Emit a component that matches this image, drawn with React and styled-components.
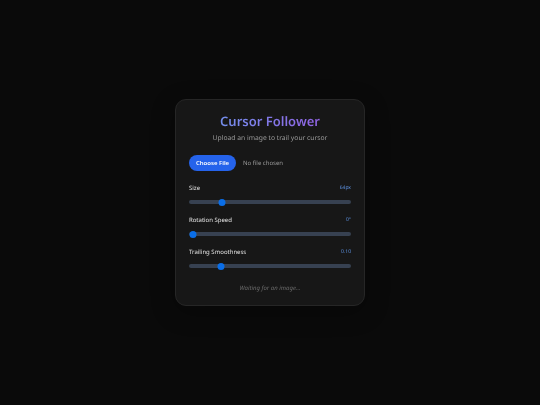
import styled, { createGlobalStyle } from 'styled-components';

const Global = createGlobalStyle`
    html, body, #root {
        height: 100%;
        margin: 0;
    }
    body {
        background: #0a0a0a;
        font-family: 'Noto Sans', sans-serif;
        text-rendering: geometricPrecision;
    }
`;

const Page = styled.div`
    height: 405px;
    display: flex;
    align-items: center;
    justify-content: center;
`;

const Card = styled.div`
    width: 190px;
    height: 207px;
    box-sizing: border-box;
    padding: 11px 13px 0;
    background: #171717;
    border: 1px solid #262626;
    border-radius: 11px;
    box-shadow: 0 6px 24px rgba(0, 0, 0, 0.3);
    display: flex;
    flex-direction: column;
    will-change: transform;
`;

const Title = styled.h1`
    margin: 0;
    font-size: 13px;
    line-height: 20px;
    font-weight: 600;
    text-align: center;
    background: linear-gradient(90deg, #6b9cf0, #9a55e0);
    -webkit-background-clip: text;
    background-clip: text;
    color: transparent;
`;

const Subtitle = styled.p`
    margin: 1px 0 0;
    font-size: 6.75px;
    line-height: 12px;
    text-align: center;
    color: #9a9a9a;
`;

const FileRow = styled.div`
    margin-top: 11px;
    display: flex;
    align-items: center;
    gap: 7px;
`;

const FileButton = styled.button`
    width: 47px;
    height: 16px;
    padding: 0;
    border: 0;
    border-radius: 8px;
    background: #2563eb;
    color: #fff;
    font: 600 6px 'Noto Sans', sans-serif;
`;

const FileName = styled.span`
    font-size: 6px;
    color: #9a9a9a;
`;

const Controls = styled.div`
    margin-top: 12px;
    display: flex;
    flex-direction: column;
    gap: 10px;
`;

const Control = styled.div`
    display: flex;
    flex-direction: column;
    gap: 4px;
`;

const LabelRow = styled.div`
    display: flex;
    justify-content: space-between;
    align-items: flex-start;
    height: 12px;
`;

const Label = styled.label`
    font-size: 6px;
    line-height: 11px;
    color: #e5e5e5;
`;

const Value = styled.span`
    margin-top: 1px;
    font-size: 5px;
    line-height: 8px;
    color: #5b8fdc;
`;

const Track = styled.div`
    position: relative;
    height: 4px;
    margin: 1px 0;
    border-radius: 2px;
    background: #374151;
`;

const Thumb = styled.div`
    position: absolute;
    top: -1.5px;
    width: 7px;
    height: 7px;
    border-radius: 50%;
    background: #0a6ee8;
    transform: translateX(-50%);
`;

const Status = styled.p`
    margin: 14px 0 0;
    font-size: 6px;
    line-height: 10px;
    font-style: italic;
    text-align: center;
    color: #6b6b6b;
`;

const sliders = [
    { label: 'Size', value: '64px', left: 33.3 },
    { label: 'Rotation Speed', value: '0°', left: 3.7 },
    { label: 'Trailing Smoothness', value: '0.10', left: 32 },
];

const App = () => {
    return (
        <Page>
            <Global />
            <Card>
                <Title>Cursor Follower</Title>
                <Subtitle>Upload an image to trail your cursor</Subtitle>
                <FileRow>
                    <FileButton>Choose File</FileButton>
                    <FileName>No file chosen</FileName>
                </FileRow>
                <Controls>
                    {sliders.map((s) => (
                        <Control key={s.label}>
                            <LabelRow>
                                <Label>{s.label}</Label>
                                <Value>{s.value}</Value>
                            </LabelRow>
                            <Track>
                                <Thumb style={{ left: `${s.left}px` }} />
                            </Track>
                        </Control>
                    ))}
                </Controls>
                <Status>Waiting for an image...</Status>
            </Card>
        </Page>
    );
};

export default App;
